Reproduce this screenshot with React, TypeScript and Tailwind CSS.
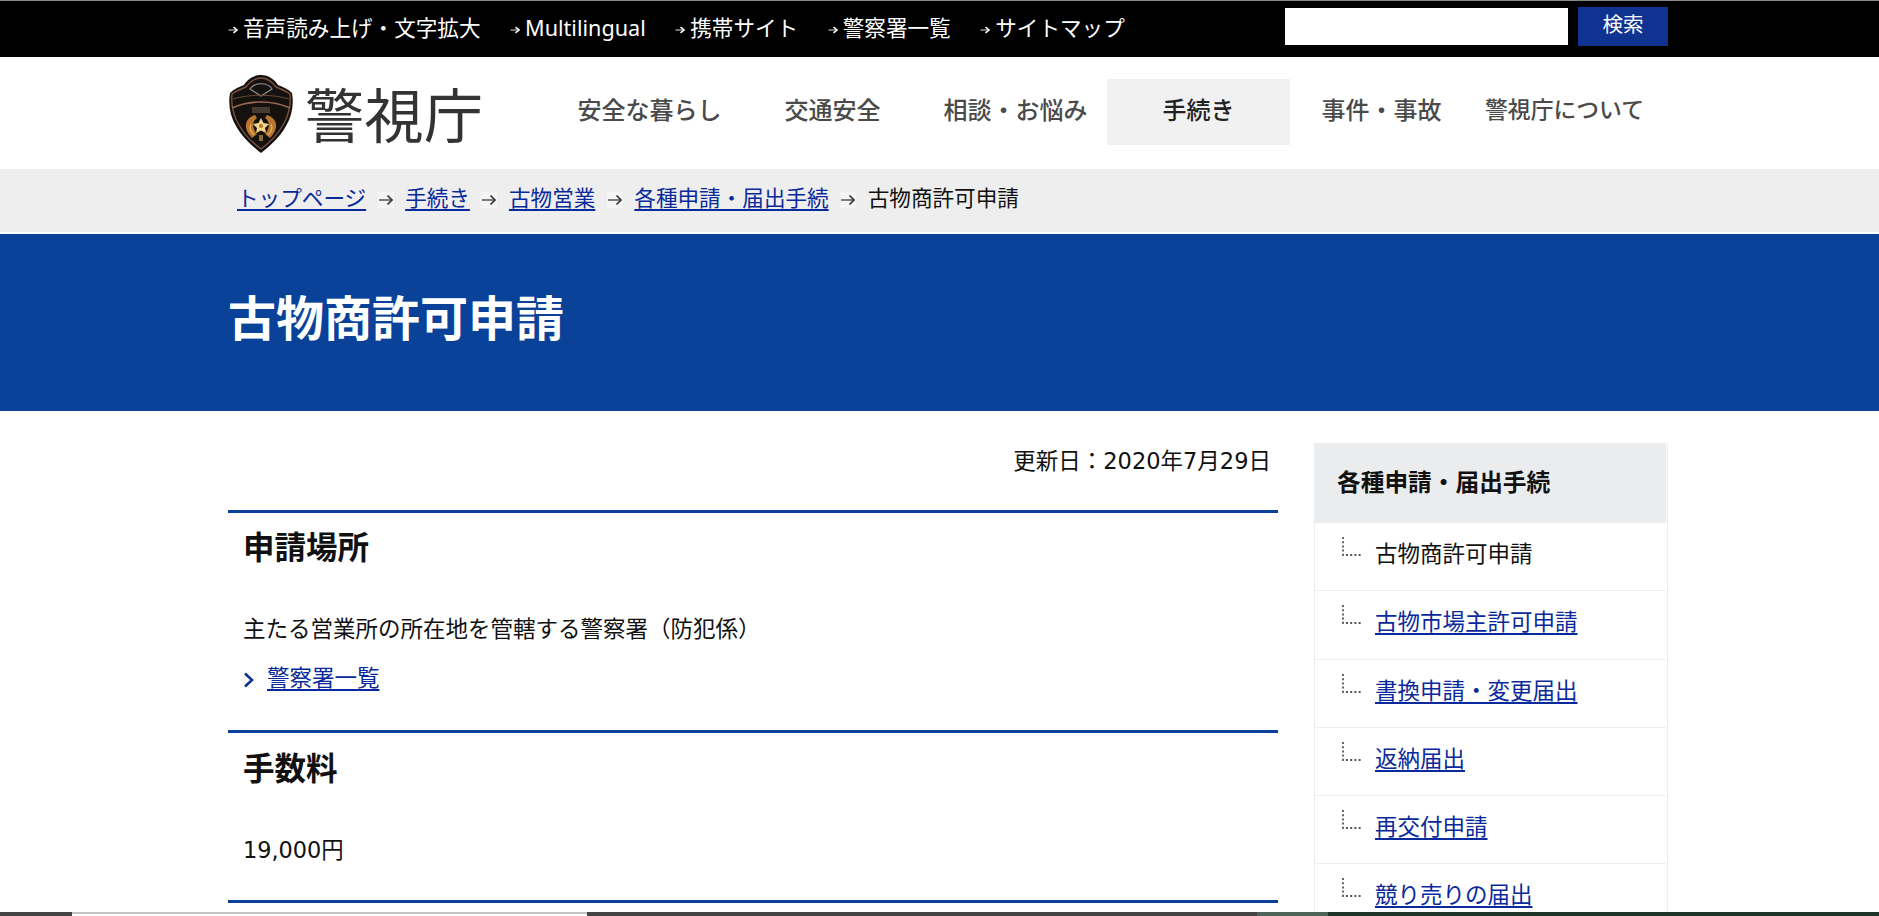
import type { ReactNode } from "react";

const topLinks = ["音声読み上げ・文字拡大", "Multilingual", "携帯サイト", "警察署一覧", "サイトマップ"];
const mainNav = ["安全な暮らし", "交通安全", "相談・お悩み", "手続き", "事件・事故", "警視庁について"];
const crumbs = ["トップページ", "手続き", "古物営業", "各種申請・届出手続"];
const sideLinks = ["古物市場主許可申請", "書換申請・変更届出", "返納届出", "再交付申請", "競り売りの届出"];

function TinyArrow() {
  return (
    <svg width="10" height="10" viewBox="0 0 10 10" className="shrink-0 mt-[3px]">
      <path d="M0.5 5H8" stroke="#ccc" strokeWidth="1.1" />
      <path d="M5.5 2.2L9 5L5.5 7.8" stroke="#fff" strokeWidth="1.5" fill="none" />
    </svg>
  );
}

function CrumbArrow() {
  return (
    <svg width="16" height="16" viewBox="0 0 16 16" className="shrink-0 mt-[4px] mx-[11.5px] bg-[#f4f4f4]">
      <path d="M1 8H14" stroke="#555" strokeWidth="1.5" />
      <path d="M9.5 3.5L14 8L9.5 12.5" stroke="#333" strokeWidth="1.7" fill="none" />
    </svg>
  );
}

function Shield() {
  return (
    <svg width="66" height="80" viewBox="0 0 66 80" className="shrink-0">
      <path d="M33 1C41 1 47 6 50 11C55 13 60 15 64 19C66 30 64 42 58 52C52 63 42 72 33 79C24 72 14 63 8 52C2 42 0 30 2 19C6 15 11 13 16 11C19 6 25 1 33 1Z" fill="#15110f" />
      <path d="M33 4C40 4 45 9 48 13C53 15 58 17 62 20C63 30 61 41 55 51C50 60 41 69 33 75C25 69 16 60 11 51C5 41 3 30 4 20C8 17 13 15 18 13C21 9 26 4 33 4Z" fill="none" stroke="#7a5240" strokeWidth="1.4" />
      <path d="M22 15C26 8 40 8 44 15L33 22Z" fill="none" stroke="#8d8d8d" strokeWidth="1.2" />
      <path d="M4 34C22 26 44 26 62 34" fill="none" stroke="#9a6a50" strokeWidth="1.6" />
      <path d="M5 25C22 20 44 20 61 25" fill="none" stroke="#6b4737" strokeWidth="1" />
      <rect x="24" y="33" width="18" height="6" fill="#4a3a34" />
      <path d="M27 41C17 44 14 54 24 64L29 60C24 54 24 47 29 44Z" fill="#b8752e" />
      <path d="M39 41C49 44 52 54 42 64L37 60C42 54 42 47 37 44Z" fill="#b8752e" />
      <path d="M23 50C21 54 23 58 26 61" fill="none" stroke="#eab35c" strokeWidth="1.2" />
      <path d="M43 50C45 54 43 58 40 61" fill="none" stroke="#eab35c" strokeWidth="1.2" />
      <path d="M33 44L35.5 49L41 50L37 54L38 59L33 56.5L28 59L29 54L25 50L30.5 49Z" fill="#f2d58c" />
      <circle cx="33" cy="52" r="2" fill="#a9762b" />
      <path d="M31 61H35V67H31Z" fill="#8a6a3a" />
    </svg>
  );
}

function TreeMark() {
  return (
    <svg width="20" height="19" viewBox="0 0 20 19" className="shrink-0">
      <path d="M1 0V18H20" fill="none" stroke="#555" strokeWidth="1.8" strokeDasharray="2 2.2" />
    </svg>
  );
}

function SideRow({ children, last }: { children: ReactNode; last?: boolean }) {
  return (
    <li className={`h-[68.3px] shrink-0 flex items-start pl-[27px] pt-[14px] ${last ? "" : "border-b border-[#eeeeee]"}`}>
      <TreeMark />
      <span className="ml-[13px] mt-[2px] leading-[30px]">{children}</span>
    </li>
  );
}

export default function App() {
  return (
    <div className="h-screen flex flex-col overflow-hidden bg-white text-[#111] text-[22.5px] font-['Noto_Sans','Noto_Sans_CJK_JP',sans-serif]">
      {/* top bar */}
      <div className="h-[57px] shrink-0 bg-black border-t border-[#888]">
        <div className="ml-[228px] w-[1440px] h-full flex items-start justify-between">
          <ul className="flex gap-[29.5px] text-white text-[21.6px] leading-[30px] pt-[12px]">
            {topLinks.map((t) => (
              <li key={t} className="flex items-center gap-[5px]">
                <TinyArrow />
                {t}
              </li>
            ))}
          </ul>
          <div className="flex items-center gap-[10px] pt-[6px]">
            <div className="w-[283px] h-[37px] bg-white" />
            <button className="w-[90px] h-[39px] bg-[#103391] text-white text-[20.5px] pb-[4px]">検索</button>
          </div>
        </div>
      </div>

      {/* header */}
      <div className="h-[112px] shrink-0">
        <div className="ml-[228px] w-[1440px] h-full flex items-start">
          <div className="flex items-center gap-[11px] w-[330px] pt-[16px]">
            <Shield />
            <span className="text-[59px] leading-[80px] text-[#333] tracking-[0.5px] pt-[2px]">警視庁</span>
          </div>
          <nav className="flex pt-[22px]">
            {mainNav.map((t) => (
              <a
                key={t}
                className={`w-[183px] h-[66px] flex items-center justify-center font-medium pb-[4px] ${
                  t === "手続き" ? "bg-[#f1f1f1] text-[#222]" : "text-[#4a4a4a]"
                } ${t === "警視庁について" ? "text-[22.8px]" : "text-[24px]"}`}
              >
                {t}
              </a>
            ))}
          </nav>
        </div>
      </div>

      {/* breadcrumb */}
      <div className="h-[63px] shrink-0 bg-[#eeeeee]">
        <div className="ml-[237px] h-full flex items-center text-[21.6px] leading-[30px] pb-[5px]">
          {crumbs.map((c) => (
            <div key={c} className="flex items-center">
              <a className="text-[#0a2a9b] underline decoration-2 underline-offset-[3px]">{c}</a>
              <CrumbArrow />
            </div>
          ))}
          <span>古物商許可申請</span>
        </div>
      </div>

      {/* title */}
      <div className="h-[177px] shrink-0 mt-[2px] bg-[#0a4199]">
        <div className="ml-[228px] h-full flex items-center pb-[9px]">
          <h1 className="text-[48px] font-bold text-white leading-[60px]">古物商許可申請</h1>
        </div>
      </div>

      {/* content */}
      <div className="flex-1 min-h-0 overflow-hidden">
        <div className="ml-[228px] w-[1440px] flex items-start">
          <div className="w-[1050px] shrink-0">
            <div className="h-[99px] flex items-center justify-end pr-[7px] pt-[2px] font-['DejaVu_Sans','Noto_Sans_CJK_JP',sans-serif] text-[22.5px]">更新日：2020年7月29日</div>
            <section className="border-t-[3px] border-[#0a4199] px-[15px] pb-[35px]">
              <h2 className="h-[70px] flex items-center text-[31.5px] font-bold pb-[2px]">申請場所</h2>
              <p className="mt-[29px] leading-[34px]">主たる営業所の所在地を管轄する警察署（防犯係）</p>
              <div className="mt-[15px] flex items-center leading-[34px]">
                <svg width="12" height="18" viewBox="0 0 12 18" className="shrink-0 mt-[4px]">
                  <path d="M2 2.5L9 9L2 15.5" fill="none" stroke="#103391" strokeWidth="2.6" />
                </svg>
                <a className="ml-[12px] text-[#0a2a9b] underline decoration-2 underline-offset-[3px]">警察署一覧</a>
              </div>
            </section>
            <section className="border-t-[3px] border-[#0a4199] px-[15px] pb-[33px]">
              <h2 className="h-[70px] flex items-center text-[31.5px] font-bold">手数料</h2>
              <p className="mt-[30px] leading-[34px] font-['DejaVu_Sans','Noto_Sans_CJK_JP',sans-serif] text-[22.4px]">19,000円</p>
            </section>
            <div className="border-t-[3px] border-[#0a4199]" />
          </div>

          <aside className="ml-[36px] mt-[32px] w-[354px] shrink-0 border-r border-[#eeeeee] pr-px">
            <h3 className="h-[80px] flex items-center pl-[23px] bg-[#ebecee] text-[23.7px] font-bold">各種申請・届出手続</h3>
            <ul className="flex flex-col border-l border-[#eeeeee]">
              <SideRow>古物商許可申請</SideRow>
              {sideLinks.map((t, i) => (
                <SideRow key={t} last={i === sideLinks.length - 1}>
                  <a className="text-[#0a2a9b] underline decoration-2 underline-offset-[3px]">{t}</a>
                </SideRow>
              ))}
            </ul>
          </aside>
        </div>
      </div>

      {/* bottom strip */}
      <div className="h-[4px] shrink-0 flex">
        <div className="w-[72px] bg-[#444444]" />
        <div className="w-[515px] bg-white border-t-2 border-[#c4c4c4]" />
        <div className="w-[670px] bg-[#444444]" />
        <div className="w-[71px] bg-[#4f6358]" />
        <div className="flex-1 bg-[#1f3328]" />
      </div>
    </div>
  );
}
